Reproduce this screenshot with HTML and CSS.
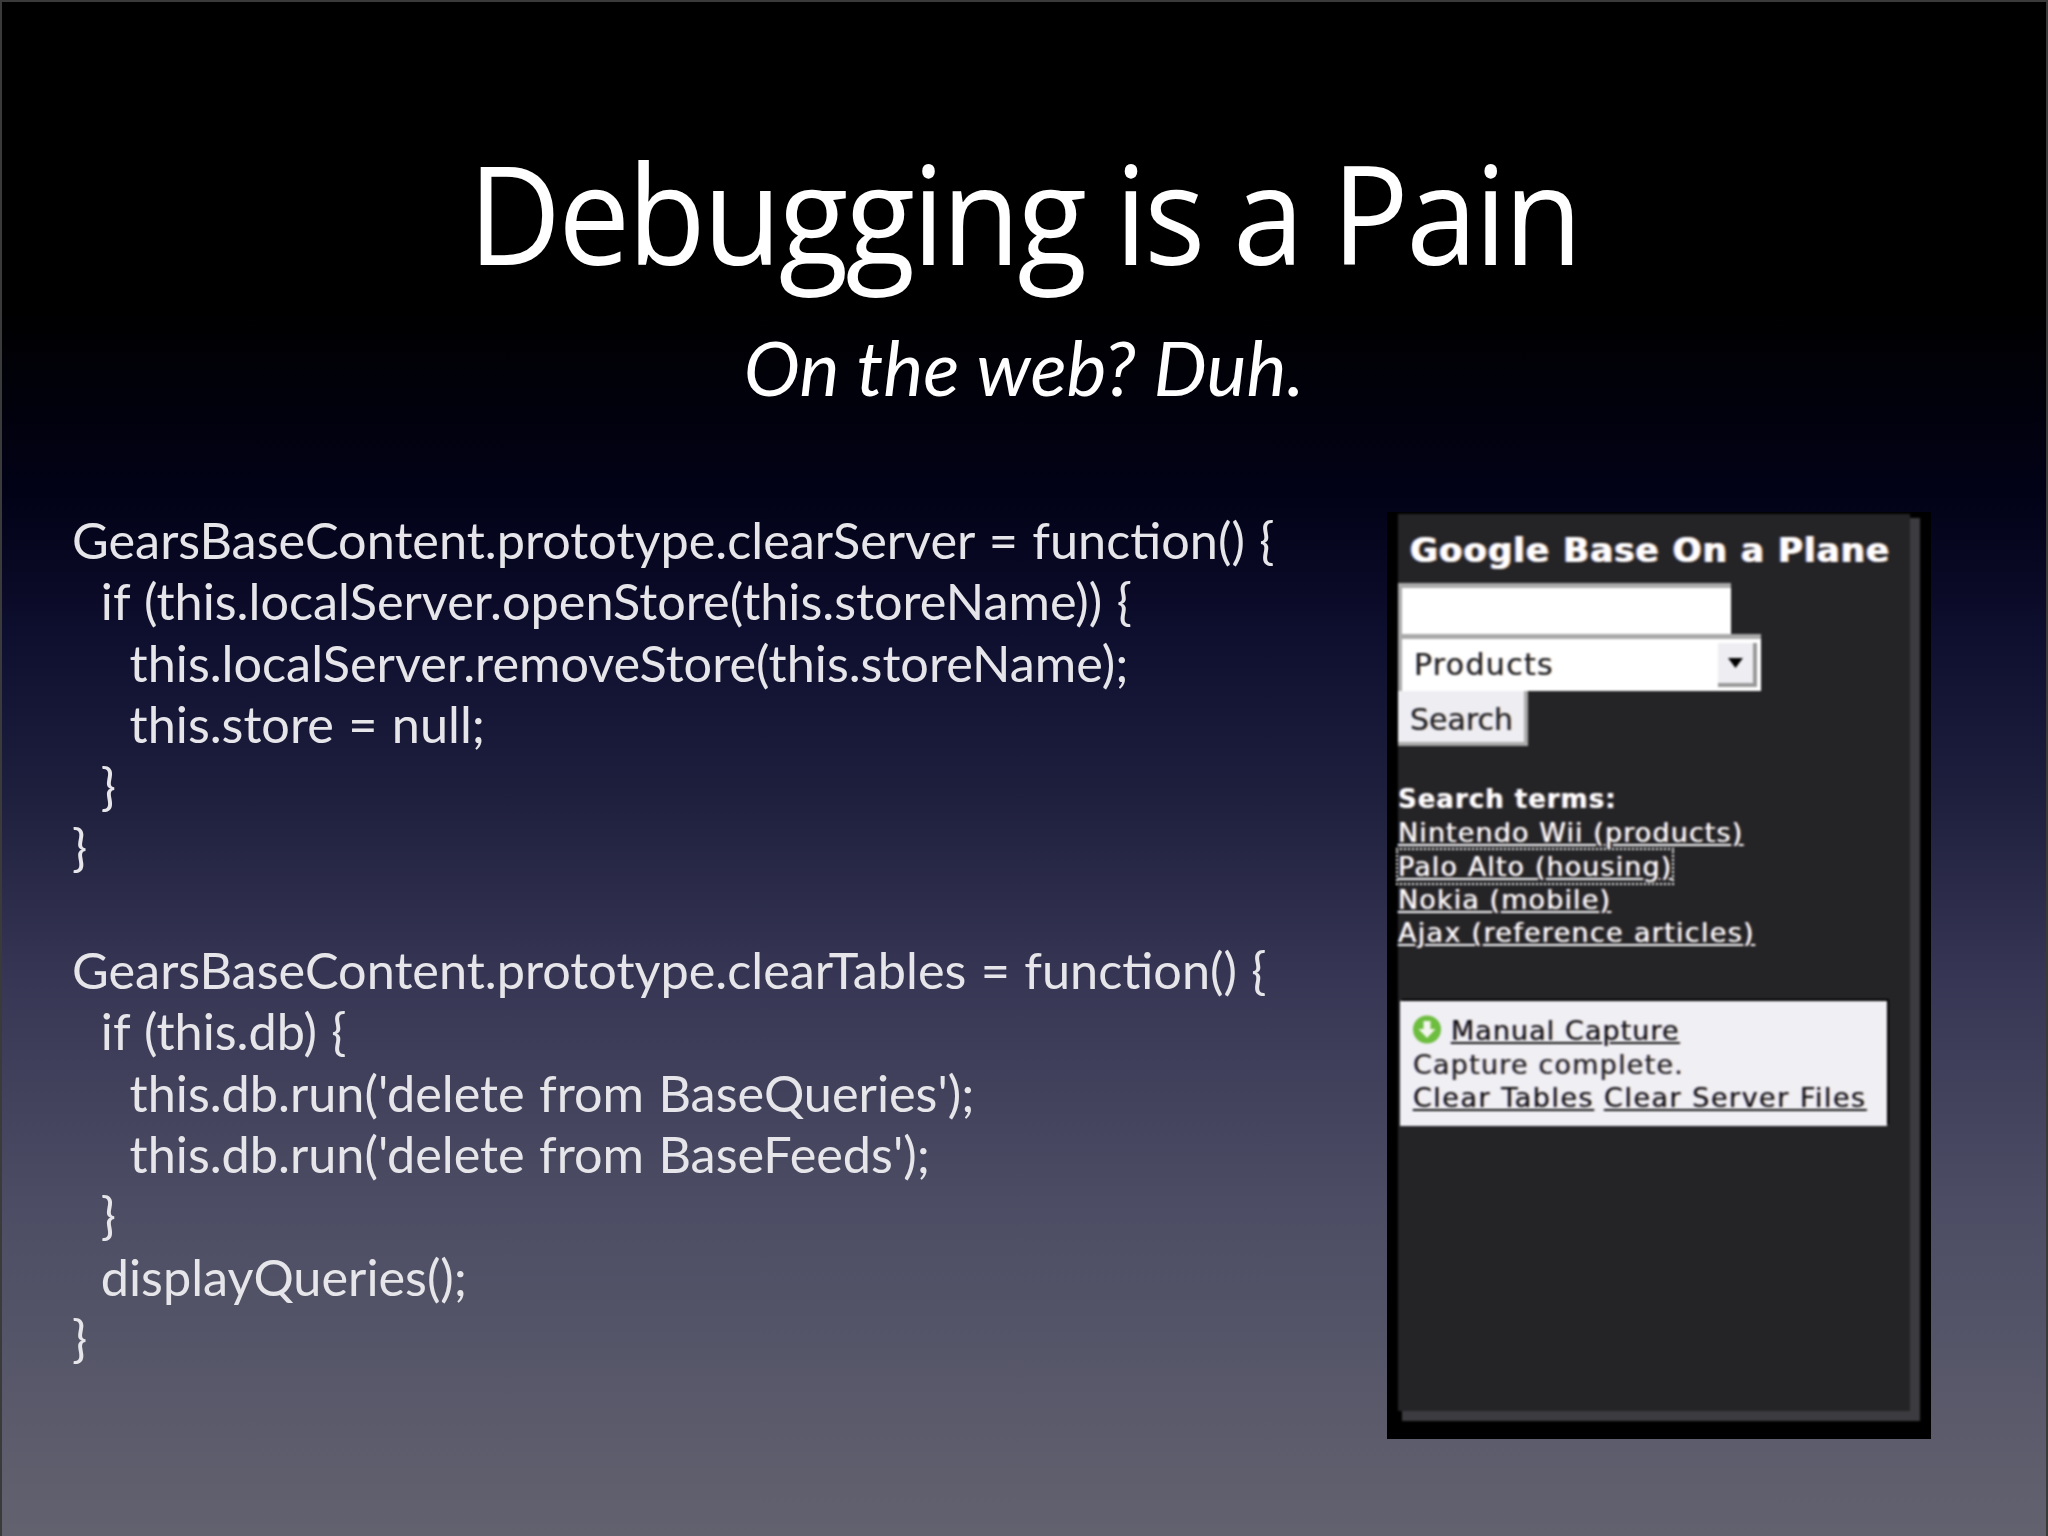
FILE: index.html
```html
<!DOCTYPE html>
<html lang="en">
<head>
<meta charset="utf-8">
<title>Debugging is a Pain</title>
<link rel="stylesheet" href="styles.css">
</head>
<body>
<main class="slide">
  <header class="head">
    <h1 class="title">Debugging is a Pain</h1>
    <p class="subtitle">On the web? Duh.</p>
  </header>
  <div class="content">
    <pre class="code">GearsBaseContent.prototype.clearServer = function() {
  if (this.localServer.openStore(this.storeName)) {
    this.localServer.removeStore(this.storeName);
    this.store = null;
  }
}

GearsBaseContent.prototype.clearTables = function() {
  if (this.db) {
    this.db.run('delete from BaseQueries');
    this.db.run('delete from BaseFeeds');
  }
  displayQueries();
}</pre>
    <aside class="frame">
      <div class="phone">
        <h2 class="phone-title">Google Base On a Plane</h2>
        <div class="input"></div>
        <div class="select">
          <span class="select-text">Products</span>
          <span class="select-btn"><svg class="caret" viewBox="0 0 12 8"><path d="M0 0h12L6 8z"/></svg></span>
        </div>
        <div class="btn">Search</div>
        <div class="terms">
          <strong class="terms-head">Search terms:</strong>
          <a class="link" href="#">Nintendo Wii (products)</a>
          <a class="link focus" href="#">Palo Alto (housing)</a>
          <a class="link" href="#">Nokia (mobile)</a>
          <a class="link wide" href="#">Ajax (reference articles)</a>
        </div>
        <div class="box">
          <div class="box-row">
            <svg class="icon" viewBox="0 0 28 29"><circle cx="14" cy="14.5" r="14" fill="#6dbd3f"/><path d="M10.5 6h7v8h5L14 23 5.500 14h5z" fill="#f4f6ef"/></svg>
            <a class="dark-link manual" href="#">Manual Capture</a>
          </div>
          <div>Capture complete.</div>
          <div class="box-links"><a class="dark-link" href="#">Clear Tables</a><a class="dark-link" href="#">Clear Server Files</a></div>
        </div>
      </div>
    </aside>
  </div>
</main>
</body>
</html>
```
FILE: styles.css
```css
* { box-sizing: border-box; }
html, body { margin: 0; padding: 0; background: #000; }
.slide {
  width: 2048px;
  height: 1536px;
  overflow: hidden;
  border: 2px solid #3a3a3a;
  border-bottom: 0;
  background: linear-gradient(180deg, #000 0, #000 300px, #020218 500px, #0f0f30 640px, #1f1f3e 800px, #373755 980px, #4c4c64 1200px, #62626f 1536px);
  color: #fff;
  font-family: "Lato", sans-serif;
  display: flex;
  flex-direction: column;
}
.head { text-align: center; height: 436px; padding-top: 130px; }
.title {
  margin: 0;
  font-family: "Open Sans", sans-serif;
  font-weight: 400;
  font-size: 137px;
  line-height: 160px;
  letter-spacing: -3px;
  transform: scaleX(.935);
}
.subtitle {
  margin: 30px 0 0;
  font-style: italic;
  font-size: 75.5px;
  line-height: 90px;
}
.content { display: flex; justify-content: space-between; align-items: flex-start; padding-left: 70px; padding-right: 115px; }
.code {
  margin: 71px 0 0;
  font-family: "Lato", sans-serif;
  font-size: 50.4px;
  line-height: 61.4px;
  word-spacing: 1.5px;
  color: #e6e6ea;
  white-space: pre;
}
.frame {
  position: relative;
  width: 544px;
  height: 927px;
  margin-top: 74px;
  background: #000;
  padding: 2px 0 0 11px;
}
.phone {
  position: relative;
  width: 512px;
  height: 897px;
  background: #242326;
  box-shadow: 7px 7px 0 3px #3c3b3f;
  font-family: "DejaVu Sans", sans-serif;
  color: #fff;
  font-size: 27px;
  letter-spacing: 1.1px;
  filter: blur(0.8px);
}
.phone-title { margin: 0; padding: 16px 0 0 12px; font-size: 34px; line-height: 40px; font-weight: 700; height: 69px; white-space: nowrap; letter-spacing: 1.1px; text-shadow: 1.5px 0 rgba(255,170,90,.8), -1.5px 0 rgba(120,160,255,.8); }
.input { width: 333px; height: 51px; background: #fff; border-top: 5px solid #aaa; border-left: 4px solid #aaa; }
.select { width: 363px; height: 57px; background: #fff; border-top: 5px solid #aaa; border-left: 4px solid #aaa; color: #222; display: flex; align-items: center; justify-content: space-between; padding-left: 12px; padding-right: 4px; }
.select-text { font-size: 30px; letter-spacing: 1.3px; margin-top: -2px; text-shadow: 1px 0 rgba(170,90,0,.35), -1px 0 rgba(40,80,200,.3); }
.select-btn { width: 39px; height: 44px; background: #eeedf2; border-right: 4px solid #999; border-bottom: 4px solid #999; display: flex; align-items: center; justify-content: center; }
.caret { width: 17px; height: 10px; }
.btn { width: 130px; height: 55px; background: #eeedf2; border-right: 4px solid #aaa; border-bottom: 4px solid #aaa; color: #222; padding: 9px 0 0 12px; font-size: 30px; line-height: 40px; letter-spacing: 0; text-shadow: 1px 0 rgba(170,90,0,.35), -1px 0 rgba(40,80,200,.3); }
.terms { margin-top: 37px; display: flex; flex-direction: column; align-items: flex-start; line-height: 33.3px; font-size: 27px; text-shadow: 1px 0 rgba(255,170,90,.55), -1px 0 rgba(120,160,255,.55); }
.terms-head { font-weight: 700; font-size: 26px; letter-spacing: 1px; }
.link { color: #fff; }
.wide { letter-spacing: 1.3px; }
.focus { outline: 2px dotted #fff; outline-offset: 0; }
.box { width: 487px; height: 125px; margin: 52px 0 0 2px; background: #f0eff4; color: #222; padding: 13px 0 0 13px; line-height: 33.300px; font-size: 27px; letter-spacing: 1.2px; box-shadow: 2px -2px 0 #000; text-shadow: 1px 0 rgba(170,90,0,.3), -1px 0 rgba(40,40,200,.3); }
.box-row { display: flex; align-items: center; gap: 10px; }
.icon { width: 28px; height: 29px; margin-top: -4px; }
.manual { letter-spacing: 1.05px; }
.box-links { display: flex; gap: 10px; letter-spacing: 1.5px; }
.dark-link { color: #111; }
```
